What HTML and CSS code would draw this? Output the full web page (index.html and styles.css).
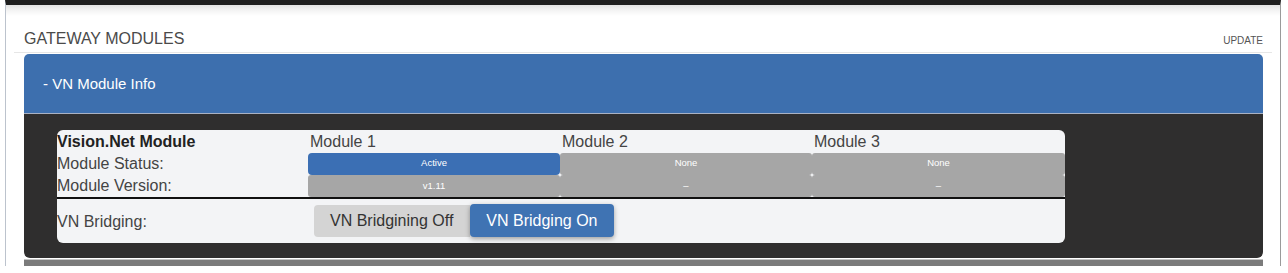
FILE: index.html
```html
<!DOCTYPE html>
<html>
<head>
<meta charset="utf-8">
<title>Gateway Modules</title>
<link rel="stylesheet" href="styles.css">
</head>
<body>
<div class="frame">
  <div class="header">
    <div class="title">GATEWAY MODULES</div>
    <div class="update">UPDATE</div>
  </div>
  <div class="bar">- VN Module Info</div>
  <div class="panel">
    <div class="box">
      <div class="hd strong">Vision.Net Module</div>
      <div class="hd">Module 1</div>
      <div class="hd">Module 2</div>
      <div class="hd">Module 3</div>

      <div class="lbl">Module Status:</div>
      <div class="cell status blue">Active</div>
      <div class="cell status gray">None</div>
      <div class="cell status gray">None</div>

      <div class="lbl">Module Version:</div>
      <div class="cell version gray">v1.11</div>
      <div class="cell version gray">–</div>
      <div class="cell version gray">–</div>

      <div class="rule"></div>

      <div class="lbl bridge-lbl">VN Bridging:</div>
      <div class="bridge">
        <div class="btn off">VN Bridgining Off</div>
        <div class="btn on">VN Bridging On</div>
      </div>
    </div>
  </div>
  <div class="next"></div>
</div>
</body>
</html>
```
FILE: styles.css
```css
html, body {
  margin: 0;
  padding: 0;
  background: #ffffff;
}
body {
  font-family: "Liberation Sans", Arial, sans-serif;
  color: #444444;
}
.frame {
  margin-left: 5px;
  width: 1274px;
  height: 261px;
  border-top: 5px solid #1e1e1e;
  border-left: 1px solid #bcc3cd;
  border-right: 1px solid #9a9a9a;
  background: linear-gradient(#e2e2e2 0px, #f5f5f5 6px, #ffffff 11px);
  overflow: hidden;
}
.header {
  margin: 0 8px;
  height: 23px;
  padding: 24px 9px 0 10px;
  border-bottom: 1px solid #e6e6e6;
  display: flex;
  justify-content: space-between;
  align-items: baseline;
}
.title {
  font-size: 16px;
  line-height: 20px;
  color: #4a4a4a;
}
.update {
  font-size: 10px;
  line-height: 20px;
  color: #555555;
}
.bar {
  margin: 1px 17px 0 18px;
  height: 59px;
  line-height: 59px;
  padding-left: 19px;
  background: #3d6fae;
  color: #ffffff;
  font-size: 15px;
  border-radius: 5px 5px 0 0;
}
.panel {
  margin: 0 17px 0 18px;
  border-top: 1px solid #a9b1c3;
  background: #2f2e2e;
  padding: 16px 0 15px 33px;
  border-radius: 0 0 6px 6px;
}
.box {
  width: 1008px;
  background: #f3f4f6;
  border-radius: 6px;
  display: grid;
  grid-template-columns: 251px 252px 252px 253px;
  grid-template-rows: 23px 22px 22px 2px 44px;
}
.hd {
  font-size: 16px;
  line-height: 23px;
  color: #444444;
  padding-left: 2px;
}
.hd.strong {
  font-weight: bold;
  color: #222222;
  padding-left: 0;
}
.lbl {
  font-size: 16px;
  line-height: 22px;
  color: #444444;
}
.cell {
  color: #ffffff;
  font-size: 9.5px;
  text-align: center;
  border-radius: 3px;
}
.cell.status {
  line-height: 20px;
  padding-bottom: 2px;
}
.cell.version {
  line-height: 22px;
}
.blue {
  background: #3b6fb4;
  border-radius: 4px;
}
.gray {
  background: #a6a6a6;
}
.rule {
  grid-column: 1 / 5;
  background: #111111;
}
.bridge-lbl {
  line-height: normal;
  padding-top: 14px;
  color: #444444;
}
.bridge {
  grid-column: 2 / 5;
  display: flex;
  align-items: flex-start;
  padding: 6px 0 0 6px;
}
.btn {
  font-size: 16px;
  height: 32px;
  line-height: 32px;
}
.off {
  background: #d4d4d4;
  color: #333333;
  padding: 0 17px 0 16px;
  border-radius: 4px 0 0 4px;
}
.on {
  background: #3f73b3;
  color: #ffffff;
  padding: 0 16px;
  border-radius: 4px;
  margin-top: -1px;
  height: 33px;
  line-height: 34px;
  box-shadow: 0 2px 5px rgba(0, 0, 0, 0.35);
}
.next {
  margin: 1px 17px 0 18px;
  height: 6px;
  border-top: 1px solid #c4c4c4;
  background: #7b7b7b;
}
```
